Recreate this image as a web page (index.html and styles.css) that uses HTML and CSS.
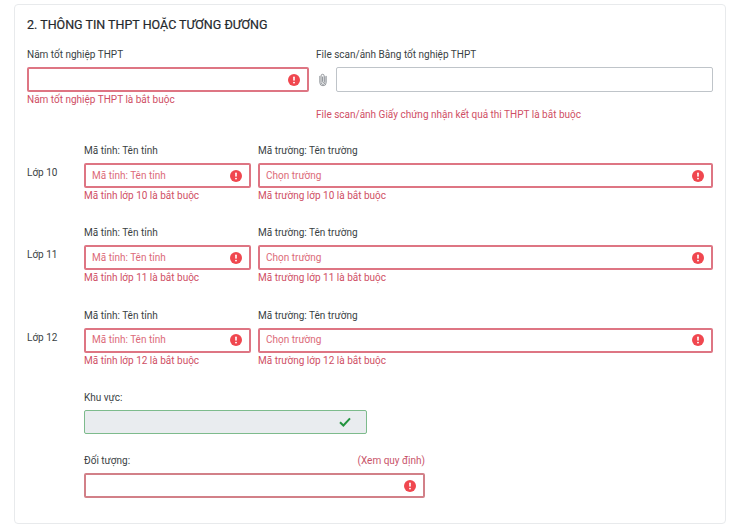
FILE: index.html
```html
<!DOCTYPE html>
<html lang="vi">
<head>
<meta charset="utf-8">
<title>Thông tin THPT</title>
<link rel="stylesheet" href="styles.css">
</head>
<body>
<svg class="defs" width="0" height="0" aria-hidden="true">
  <symbol id="err" viewBox="0 0 12 12">
    <circle cx="6" cy="6" r="6" fill="#f0474f"/>
    <rect x="5.2" y="2.6" width="1.6" height="4.2" rx=".7" fill="#fff"/>
    <circle cx="6" cy="8.6" r=".95" fill="#fff"/>
  </symbol>
</svg>
<main class="card">
  <h2 class="title">2. THÔNG TIN THPT HOẶC TƯƠNG ĐƯƠNG</h2>

  <div class="top">
    <div class="top-left">
      <label class="label">Năm tốt nghiệp THPT</label>
      <div class="field invalid"><svg class="icon"><use href="#err"/></svg></div>
      <p class="error">Năm tốt nghiệp THPT là bắt buộc</p>
    </div>
    <div class="top-right">
      <label class="label">File scan/ảnh Bằng tốt nghiệp THPT</label>
      <div class="file-row">
        <svg class="clip" viewBox="0 0 10 16" fill="none" stroke="#858a8f" stroke-width="1.1" stroke-linecap="round">
          <path d="M7.4 4.5v7.2a2.4 2.4 0 0 1-4.8 0V3.4a1.9 1.9 0 0 1 3.8 0v7.4a1 1 0 0 1-2 0V4.8"/>
          <path d="M9 4v7.8a4 4 0 0 1-8 0V4"/>
        </svg>
        <div class="field file"></div>
      </div>
      <p class="error file-error">File scan/ảnh Giấy chứng nhận kết quả thi THPT là bắt buộc</p>
    </div>
  </div>

  <section class="grade">
    <div class="grade-name">Lớp 10</div>
    <div class="col-province">
      <label class="label">Mã tỉnh: Tên tỉnh</label>
      <div class="field invalid"><span class="ph">Mã tỉnh: Tên tỉnh</span><svg class="icon"><use href="#err"/></svg></div>
      <p class="error">Mã tỉnh lớp 10 là bắt buộc</p>
    </div>
    <div class="col-school">
      <label class="label">Mã trường: Tên trường</label>
      <div class="field invalid"><span class="ph">Chọn trường</span><svg class="icon"><use href="#err"/></svg></div>
      <p class="error">Mã trường lớp 10 là bắt buộc</p>
    </div>
  </section>

  <section class="grade">
    <div class="grade-name">Lớp 11</div>
    <div class="col-province">
      <label class="label">Mã tỉnh: Tên tỉnh</label>
      <div class="field invalid"><span class="ph">Mã tỉnh: Tên tỉnh</span><svg class="icon"><use href="#err"/></svg></div>
      <p class="error">Mã tỉnh lớp 11 là bắt buộc</p>
    </div>
    <div class="col-school">
      <label class="label">Mã trường: Tên trường</label>
      <div class="field invalid"><span class="ph">Chọn trường</span><svg class="icon"><use href="#err"/></svg></div>
      <p class="error">Mã trường lớp 11 là bắt buộc</p>
    </div>
  </section>

  <section class="grade">
    <div class="grade-name">Lớp 12</div>
    <div class="col-province">
      <label class="label">Mã tỉnh: Tên tỉnh</label>
      <div class="field invalid"><span class="ph">Mã tỉnh: Tên tỉnh</span><svg class="icon"><use href="#err"/></svg></div>
      <p class="error">Mã tỉnh lớp 12 là bắt buộc</p>
    </div>
    <div class="col-school">
      <label class="label">Mã trường: Tên trường</label>
      <div class="field invalid"><span class="ph">Chọn trường</span><svg class="icon"><use href="#err"/></svg></div>
      <p class="error">Mã trường lớp 12 là bắt buộc</p>
    </div>
  </section>

  <section class="area">
    <label class="label">Khu vực:</label>
    <div class="field valid">
      <svg class="check" viewBox="0 0 12 10" fill="none" stroke="#23943f" stroke-width="2">
        <path d="M1 5.2l3.4 3.3L11 1.4"/>
      </svg>
    </div>
  </section>

  <section class="target">
    <div class="label label-split"><label>Đối tượng:</label><a class="rule">(Xem quy định)</a></div>
    <div class="field invalid muted"><svg class="icon"><use href="#err"/></svg></div>
  </section>
</main>
</body>
</html>
```
FILE: styles.css
```css
* { box-sizing: border-box; }
html, body { margin: 0; padding: 0; }
body {
  width: 739px;
  height: 532px;
  overflow: hidden;
  background: #fff;
  padding: 4px 13px 0 14px;
  font-family: Roboto, "Noto Sans", sans-serif;
  font-size: 10px;
  line-height: 14px;
  color: #3a3f44;
}
.defs { position: absolute; }
.card {
  height: 520px;
  padding: 12px 12px 0 12px;
  border: 1px solid #e8eaec;
  border-radius: 4px;
  background: #fff;
}
.title {
  margin: 0;
  font-size: 12.5px;
  line-height: 16px;
  font-weight: 400;
  color: #24282c;
  -webkit-text-stroke: .2px #24282c;
}
.label { display: block; height: 14px; }
.field {
  display: flex;
  align-items: center;
  justify-content: space-between;
  height: 25px;
  margin-top: 5px;
  padding: 0 7px 0 6px;
  border: 1px solid #bfc4c9;
  border-radius: 2px;
  background: #fff;
}
.invalid { border: 2px solid #de7583; }
.muted { border-color: #d28088; }
.valid {
  width: 283px;
  height: 24px;
  border-color: #7dbb8c;
  background: #e9ecef;
  justify-content: flex-end;
  padding-right: 15px;
}
.icon { width: 12px; height: 12px; margin-left: auto; flex: none; }
.check { width: 12px; height: 10px; }
.ph { color: #dc6a78; }
.error { margin: 0; height: 14px; color: #cf4f65; }

.top { display: flex; gap: 7px; margin-top: 15px; }
.top-left { width: 282px; flex: none; }
.top-right { flex: 1; }
.top-left .error { margin-top: 1px; }
.file-row { display: flex; align-items: flex-end; gap: 9px; }
.clip { width: 8px; height: 15px; margin: 0 0 5px 3px; flex: none; }
.file { flex: 1; }
.file-error { margin-top: 16px; }

.grade { display: flex; height: 82.4px; }
.top + .grade { margin-top: 22px; }
.grade-name { width: 57px; flex: none; padding-top: 22px; }
.col-province { width: 167px; flex: none; margin-right: 7px; }
.col-school { flex: 1; }
.grade .error { margin-top: 1px; }

.area { margin: 0 0 0 57px; }
.target { width: 341px; margin: 20px 0 0 57px; }
.label-split { display: flex; justify-content: space-between; }
.rule { color: #c9546a; }
```
